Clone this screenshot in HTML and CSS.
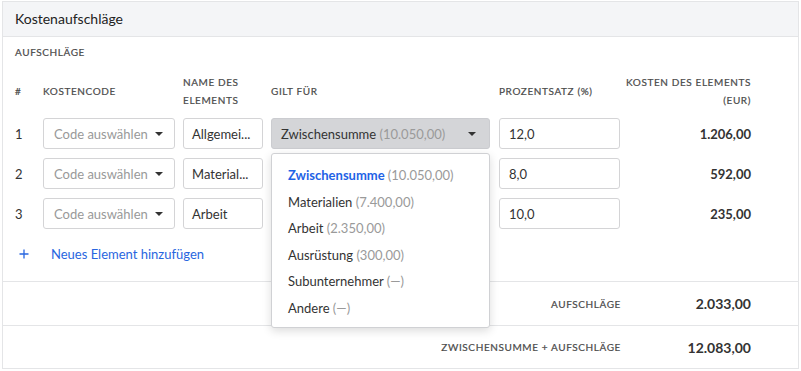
FILE: index.html
```html
<!DOCTYPE html>
<html lang="de">
<head>
  <meta charset="UTF-8">
  <meta name="viewport" content="width=device-width, initial-scale=1.0">
  <title>Kostenaufschläge</title>
  <link rel="stylesheet" href="styles.css">
</head>
<body>
  <div class="card">
    <div class="card-header">Kostenaufschläge</div>

    <div class="card-body">
      <div class="section-label">Aufschläge</div>

      <div class="grid head-row">
        <div>#</div>
        <div>Kostencode</div>
        <div>Name des Elements</div>
        <div>Gilt für</div>
        <div>Prozentsatz (%)</div>
        <div class="num">Kosten des Elements (EUR)</div>
      </div>

      <div class="rows">
        <div class="grid item-row">
          <div class="idx">1</div>
          <div class="field select code"><span class="placeholder">Code auswählen</span><span class="caret"></span></div>
          <div class="field name">Allgemei...</div>
          <div class="applies">
            <div class="field select base active"><span>Zwischensumme <span class="muted">(10.050,00)</span></span><span class="caret"></span></div>
            <ul class="menu">
              <li class="selected">Zwischensumme <span class="muted">(10.050,00)</span></li>
              <li>Materialien <span class="muted">(7.400,00)</span></li>
              <li>Arbeit <span class="muted">(2.350,00)</span></li>
              <li>Ausrüstung <span class="muted">(300,00)</span></li>
              <li>Subunternehmer <span class="muted">(—)</span></li>
              <li>Andere <span class="muted">(—)</span></li>
            </ul>
          </div>
          <div class="field pct">12,0</div>
          <div class="num amount">1.206,00</div>
        </div>

        <div class="grid item-row">
          <div class="idx">2</div>
          <div class="field select code"><span class="placeholder">Code auswählen</span><span class="caret"></span></div>
          <div class="field name">Material...</div>
          <div class="applies">
            <div class="field select base"></div>
          </div>
          <div class="field pct">8,0</div>
          <div class="num amount">592,00</div>
        </div>

        <div class="grid item-row">
          <div class="idx">3</div>
          <div class="field select code"><span class="placeholder">Code auswählen</span><span class="caret"></span></div>
          <div class="field name">Arbeit</div>
          <div class="applies">
            <div class="field select base"></div>
          </div>
          <div class="field pct">10,0</div>
          <div class="num amount">235,00</div>
        </div>
      </div>

      <div class="add-row">
        <svg class="plus" width="10" height="10" viewBox="0 0 10 10">
          <path d="M5 0.5V9.5M0.5 5H9.5" stroke="currentColor" stroke-width="1.3" fill="none"/>
        </svg>
        <span>Neues Element hinzufügen</span>
      </div>
    </div>

    <div class="grid total-row">
      <div class="total-label">Aufschläge</div>
      <div class="num total-value">2.033,00</div>
    </div>
    <div class="grid total-row last">
      <div class="total-label">Zwischensumme + Aufschläge</div>
      <div class="num total-value">12.083,00</div>
    </div>
  </div>
</body>
</html>
```

FILE: styles.css
```css
body {
  margin: 0;
  padding: 1px 2px 0 2px;
  font-family: Lato, "Open Sans", Arial, sans-serif;
  font-size: 13px;
  color: #333;
  background-color: #fff;
}

.card {
  border: 1px solid #e4e5e7;
  background-color: #fff;
}

.card-header {
  height: 34px;
  line-height: 34px;
  padding-left: 12px;
  font-size: 14px;
  color: #222;
  background-color: #f4f5f7;
  border-bottom: 1px solid #e4e5e7;
}

.card-body {
  padding: 6px 12px 18px 12px;
}

.section-label,
.head-row,
.total-label {
  font-size: 10px;
  letter-spacing: 0.6px;
  text-transform: uppercase;
  color: #4a4a4a;
  -webkit-text-stroke: 0.2px #4a4a4a;
}

.section-label {
  line-height: 18px;
}

.grid {
  display: grid;
  grid-template-columns: 28px 140px 88px 228px 121px 131px;
  align-items: center;
}

.head-row {
  margin-top: 12px;
  line-height: 18px;
}

.num {
  text-align: right;
}

.rows {
  display: flex;
  flex-direction: column;
  gap: 9px;
  margin-top: 9px;
}

.item-row {
  height: 31px;
}

.field {
  box-sizing: border-box;
  height: 31px;
  border: 1px solid #d4d4d6;
  border-radius: 3px;
  background-color: #fff;
  display: flex;
  align-items: center;
  white-space: nowrap;
  overflow: hidden;
}

.select {
  justify-content: space-between;
}

.code {
  width: 132px;
  padding: 0 11px 0 10px;
}

.placeholder {
  color: #999;
}

.name {
  width: 80px;
  padding: 0 8px;
}

.applies {
  position: relative;
}

.base {
  width: 219px;
  padding: 0 13px 0 9px;
}

.base.active {
  background-color: #d4d5d8;
  border-color: #cbccd0;
}

.pct {
  width: 121px;
  padding: 0 9px;
}

.caret {
  width: 0;
  height: 0;
  border-left: 4px solid transparent;
  border-right: 4px solid transparent;
  border-top: 4px solid #333;
}

.muted {
  color: #9a9a9a;
}

.amount {
  font-weight: 700;
}

.menu {
  position: absolute;
  top: 35px;
  left: 0;
  z-index: 2;
  box-sizing: border-box;
  width: 219px;
  margin: 0;
  padding: 8px 0 5px 0;
  list-style: none;
  background-color: #fff;
  border: 1px solid #d0d1d4;
  border-radius: 3px;
  box-shadow: 0 3px 10px rgba(0, 0, 0, 0.14);
}

.menu li {
  padding-left: 16px;
  line-height: 26.6px;
  white-space: nowrap;
}

.menu li.selected {
  color: #1f63e6;
  font-weight: 700;
}

.menu li.selected .muted {
  font-weight: 400;
}

.add-row {
  margin-top: 16px;
  height: 18px;
  display: flex;
  align-items: center;
  color: #2866e0;
}

.plus {
  margin-left: 4px;
  margin-right: 22px;
}

.total-row {
  height: 43px;
  padding: 0 12px;
  border-top: 1px solid #e4e5e7;
}

.total-row.last {
  height: 42px;
}

.total-label {
  grid-column: 1 / 6;
  text-align: right;
  margin-right: -1px;
}

.total-value {
  font-size: 14px;
  font-weight: 700;
}
```
